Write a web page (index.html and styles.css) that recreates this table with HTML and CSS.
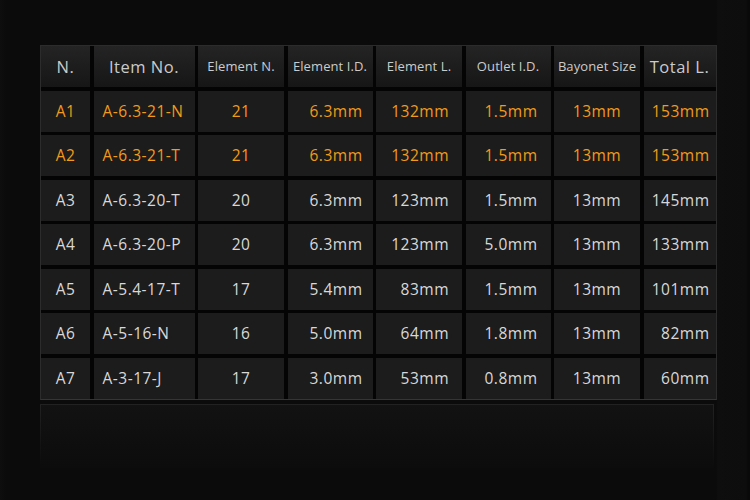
FILE: index.html
```html
<!DOCTYPE html>
<html>
<head>
<meta charset="utf-8">
<link rel="stylesheet" href="styles.css">
</head>
<body>
<div class="page">
  <div class="table">
    <div class="cell head big">N.</div>
    <div class="cell head big">Item No.</div>
    <div class="cell head">Element N.</div>
    <div class="cell head">Element I.D.</div>
    <div class="cell head">Element L.</div>
    <div class="cell head">Outlet I.D.</div>
    <div class="cell head">Bayonet Size</div>
    <div class="cell head big">Total L.</div>

    <div class="cell c1 hl">A1</div><div class="cell c2 hl">A-6.3-21-N</div><div class="cell c3 hl">21</div><div class="cell c4 hl">6.3mm</div><div class="cell c5 hl">132mm</div><div class="cell c6 hl">1.5mm</div><div class="cell c7 hl">13mm</div><div class="cell c8 hl">153mm</div>
    <div class="cell c1 hl">A2</div><div class="cell c2 hl">A-6.3-21-T</div><div class="cell c3 hl">21</div><div class="cell c4 hl">6.3mm</div><div class="cell c5 hl">132mm</div><div class="cell c6 hl">1.5mm</div><div class="cell c7 hl">13mm</div><div class="cell c8 hl">153mm</div>
    <div class="cell c1">A3</div><div class="cell c2">A-6.3-20-T</div><div class="cell c3">20</div><div class="cell c4">6.3mm</div><div class="cell c5">123mm</div><div class="cell c6">1.5mm</div><div class="cell c7">13mm</div><div class="cell c8">145mm</div>
    <div class="cell c1">A4</div><div class="cell c2">A-6.3-20-P</div><div class="cell c3">20</div><div class="cell c4">6.3mm</div><div class="cell c5">123mm</div><div class="cell c6">5.0mm</div><div class="cell c7">13mm</div><div class="cell c8">133mm</div>
    <div class="cell c1">A5</div><div class="cell c2">A-5.4-17-T</div><div class="cell c3">17</div><div class="cell c4">5.4mm</div><div class="cell c5">83mm</div><div class="cell c6">1.5mm</div><div class="cell c7">13mm</div><div class="cell c8">101mm</div>
    <div class="cell c1">A6</div><div class="cell c2">A-5-16-N</div><div class="cell c3">16</div><div class="cell c4">5.0mm</div><div class="cell c5">64mm</div><div class="cell c6">1.8mm</div><div class="cell c7">13mm</div><div class="cell c8">82mm</div>
    <div class="cell c1">A7</div><div class="cell c2">A-3-17-J</div><div class="cell c3">17</div><div class="cell c4">3.0mm</div><div class="cell c5">53mm</div><div class="cell c6">0.8mm</div><div class="cell c7">13mm</div><div class="cell c8">60mm</div>
  </div>
  <div class="footer-panel"></div>
</div>
</body>
</html>
```

FILE: styles.css
```css
html, body {
  margin: 0;
  padding: 0;
  background: #0b0b0b;
}
body {
  width: 750px;
  height: 500px;
  overflow: hidden;
  font-family: "Open Sans", "DejaVu Sans", sans-serif;
  background: linear-gradient(90deg, #0e0e0e 0, #0b0b0b 6px, #0b0b0b 716px, #0e0e0e 718px, #0d0d0d 746px, #090909 748px);
}
.page {
  padding: 45px 0 0 40px;
  display: flex;
  flex-direction: column;
  gap: 4px;
}
.table {
  width: 674.5px;
  display: grid;
  grid-template-columns: 49px 101px 86px 85px 86px 85px 86px 72px;
  grid-template-rows: 41px repeat(7, 41px);
  column-gap: 3.5px;
  row-gap: 3.5px;
  background: #040404;
  border: 1px solid #2c2c2c;
  border-bottom-color: #353535;
}
.cell {
  display: flex;
  align-items: center;
  justify-content: center;
  padding-bottom: 1px;
  background: #1c1c1c;
  color: #d8d8d8;
  font-size: 15.5px;
  letter-spacing: 0.5px;
  white-space: nowrap;
}
.head {
  background: linear-gradient(#242424, #161616);
  color: #cbcbcb;
  font-size: 13px;
  letter-spacing: 0.1px;
}
.head.big {
  font-size: 16.5px;
  letter-spacing: 0.5px;
}
.hl {
  color: #f29a1a;
}
.c2 {
  justify-content: flex-start;
  padding-left: 9px;
}
.c4 {
  justify-content: flex-end;
  padding-right: 10px;
}
.c5, .c6 {
  justify-content: flex-end;
  padding-right: 13px;
}
.c8 {
  justify-content: flex-end;
  padding-right: 6px;
}
.footer-panel {
  width: 674px;
  height: 64px;
  border: 1px solid #1e1e1e;
  border-bottom: none;
  border-image: linear-gradient(#222, #0b0b0b) 1;
  background: linear-gradient(#121212, #0c0c0c);
  box-sizing: border-box;
}
```
